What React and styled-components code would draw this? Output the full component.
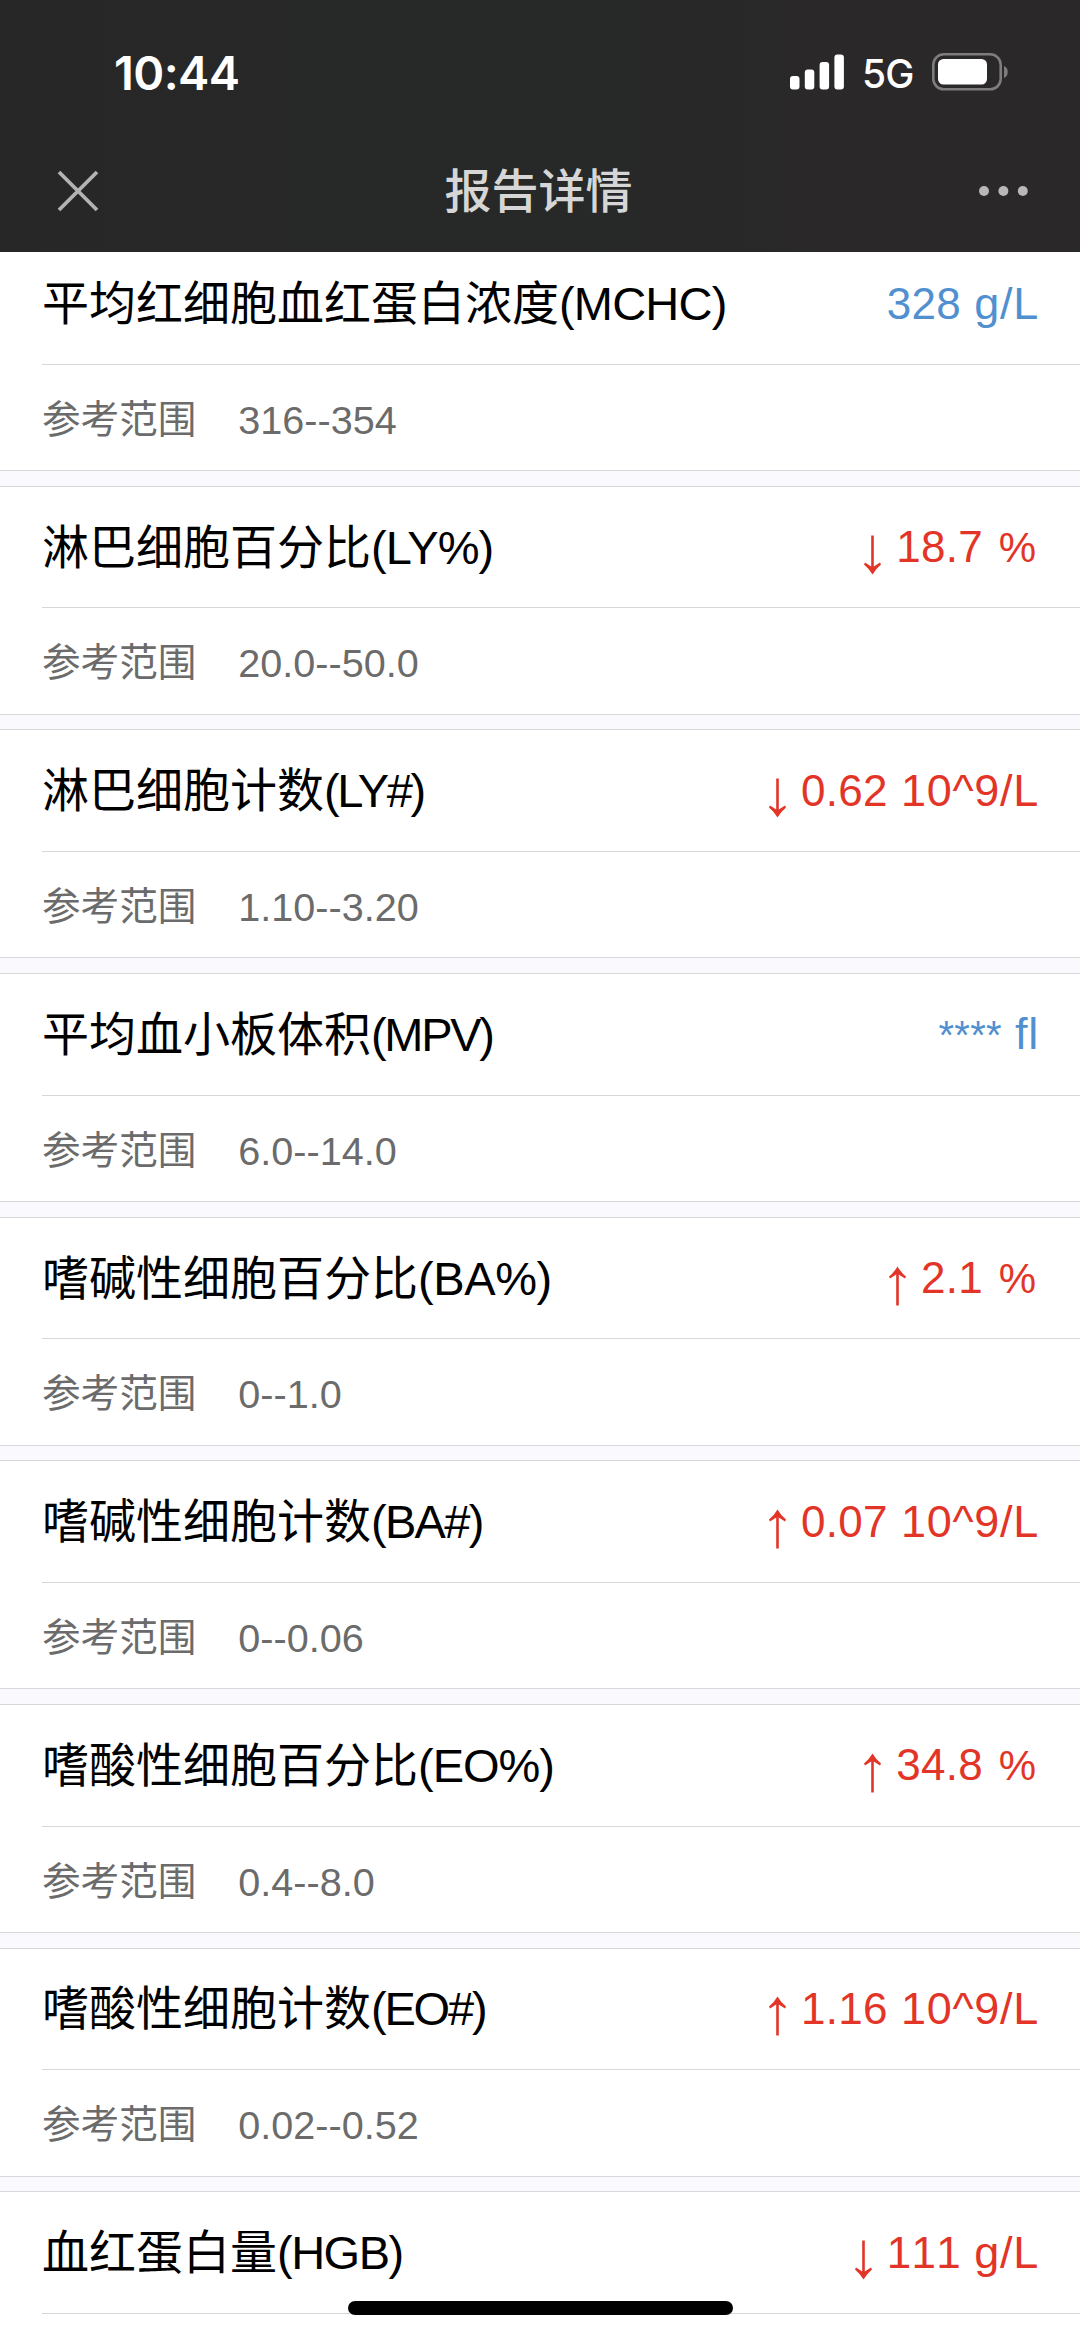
import React from 'react';
import styled, { createGlobalStyle } from 'styled-components';

const GlobalStyle = createGlobalStyle`
    body {
        margin: 0;
        background: #fff;
        font-family: "Liberation Sans", "Noto Sans CJK SC", sans-serif;
    }
`;

const Screen = styled.div`
    position: relative;
    display: flex;
    flex-direction: column;
    width: 1080px;
    height: 2337px;
    overflow: hidden;
    background: #fff;
`;

const Header = styled.header`
    flex: none;
    height: 252px;
    background: linear-gradient(90deg, #272727 0%, #272828 55%, #2a2829 75%);
`;

const StatusBar = styled.div`
    display: flex;
    align-items: center;
    justify-content: space-between;
    height: 144px;
    padding: 0 71px 0 114px;
    box-sizing: border-box;
    font-family: Inter, sans-serif;
    color: #fff;
`;

const Time = styled.span`
    font-size: 47px;
    font-weight: 600;
    letter-spacing: -0.6px;
`;

const StatusIcons = styled.div`
    display: flex;
    align-items: center;
`;

const Network = styled.span`
    width: 51px;
    margin: 3px 19px 0 17px;
    font-size: 39px;
    font-weight: 500;
    letter-spacing: -0.8px;
`;

const NavBar = styled.div`
    display: flex;
    align-items: center;
    justify-content: space-between;
    height: 94px;
    padding: 0 52px 0 57px;
`;

const NavTitle = styled.h1`
    margin: 1px 0 0;
    font-size: 47px;
    font-weight: 500;
    line-height: 60px;
    color: #d6d6d6;
`;

const Content = styled.main`
    flex: 1;
    min-height: 0;
    overflow: hidden;
`;

// The list is scrolled a little, so its first row starts under the header
const List = styled.div`
    margin-top: -9.8px;
    background: #f9f9fe;
`;

const Item = styled.section`
    height: 229px;
    margin-bottom: 14.63px;
    box-sizing: border-box;
    border-top: 1px solid #d8d8da;
    border-bottom: 1px solid #d8d8da;
    background: #fff;
`;

const ItemHead = styled.div`
    display: flex;
    align-items: center;
    justify-content: space-between;
    height: 121.6px;
    margin-left: 42px;
    padding: 1px 41px 0 0;
    box-sizing: border-box;
    border-bottom: 1px solid #d8d8da;
`;

const Name = styled.span`
    font-size: 47px;
    line-height: 60px;
    color: #000;
`;

const Code = styled.span`
    letter-spacing: ${({ $tracking }) => $tracking}px;
`;

const Value = styled.span`
    display: flex;
    align-items: baseline;
    font-size: 45px;
    line-height: 60px;
    font-kerning: none;
    white-space: pre;
    color: ${({ $abnormal }) => ($abnormal ? '#e23528' : '#5190d0')};
`;

const Amount = styled.span`
    font-size: ${({ $masked }) => ($masked ? '40px' : '44px')};
    letter-spacing: 0.3px;
`;

const Unit = styled.span`
    letter-spacing: 0.7px;
`;

const Percent = styled.span`
    margin: 0 3px 0 4px;
    font-size: 42px;
`;

const Arrow = styled.svg`
    align-self: center;
    width: 17px;
    height: 40px;
    margin: 14px 15px 0 0;
    transform: ${({ $dir }) => ($dir === 'up' ? 'rotate(180deg)' : 'none')};
`;

const Reference = styled.div`
    display: flex;
    align-items: center;
    height: 106px;
    margin-left: 42px;
    padding-top: 4px;
    box-sizing: border-box;
    font-size: 38.6px;
    line-height: 50px;
    color: #6b6b6b;
`;

const Range = styled.span`
    margin-left: 42px;
    font-size: 39.6px;
    font-kerning: none;
`;

const HomeIndicator = styled.div`
    position: absolute;
    left: 348px;
    bottom: 22px;
    width: 385px;
    height: 14px;
    border-radius: 7px;
    background: #000;
`;

const SignalIcon = () => (
    <svg width="55" height="36" viewBox="0 0 55 36" fill="#fff">
        <rect x="0" y="22" width="9.5" height="13.5" rx="3" />
        <rect x="14.8" y="15.5" width="9.5" height="20" rx="3" />
        <rect x="29.6" y="8" width="9.5" height="27.5" rx="3" />
        <rect x="44.4" y="0.5" width="9.5" height="35" rx="3" />
    </svg>
);

const BatteryIcon = () => (
    <svg width="77" height="38" viewBox="0 0 77 38">
        <rect x="1.3" y="1.3" width="67.4" height="35" rx="10.5" fill="none" stroke="#7e7d7d" strokeWidth="2.6" />
        <rect x="6" y="6" width="49" height="25.5" rx="5.5" fill="#fff" />
        <path d="M72 13 C77 14.5 77 23.5 72 25 Z" fill="#7e7d7d" />
    </svg>
);

const CloseIcon = () => (
    <svg width="42" height="42" viewBox="0 0 42 42" stroke="#b4b3b4" strokeWidth="3.8">
        <path d="M2 2 L40 40 M40 2 L2 40" />
    </svg>
);

const MoreIcon = () => (
    <svg width="50" height="12" viewBox="0 0 50 12" fill="#b9b7b8">
        <circle cx="6" cy="6" r="5" />
        <circle cx="25.4" cy="6" r="5" />
        <circle cx="44.8" cy="6" r="5" />
    </svg>
);

const ArrowIcon = ({ dir }) => (
    <Arrow $dir={dir} viewBox="0 0 17 40" fill="currentColor">
        <path d="M7.2 0.5 H9.8 V31.5 L16 27.6 L17 29.4 Q12 33.5 8.5 39.5 Q5 33.5 0 29.4 L1 27.6 L7.2 31.5 Z" />
    </Arrow>
);

const items = [
    { name: '平均红细胞血红蛋白浓度', code: '(MCHC)', tracking: -0.8, value: '328', unit: 'g/L', range: '316--354' },
    { name: '淋巴细胞百分比', code: '(LY%)', tracking: -1, value: '18.7', unit: '%', range: '20.0--50.0', dir: 'down' },
    { name: '淋巴细胞计数', code: '(LY#)', tracking: -2.3, value: '0.62', unit: '10^9/L', range: '1.10--3.20', dir: 'down' },
    { name: '平均血小板体积', code: '(MPV)', tracking: -2.3, value: '****', unit: 'fl', range: '6.0--14.0' },
    { name: '嗜碱性细胞百分比', code: '(BA%)', tracking: -0.4, value: '2.1', unit: '%', range: '0--1.0', dir: 'up' },
    { name: '嗜碱性细胞计数', code: '(BA#)', tracking: -1.7, value: '0.07', unit: '10^9/L', range: '0--0.06', dir: 'up' },
    { name: '嗜酸性细胞百分比', code: '(EO%)', tracking: -1, value: '34.8', unit: '%', range: '0.4--8.0', dir: 'up' },
    { name: '嗜酸性细胞计数', code: '(EO#)', tracking: -2.2, value: '1.16', unit: '10^9/L', range: '0.02--0.52', dir: 'up' },
    { name: '血红蛋白量', code: '(HGB)', tracking: -1.5, value: '111', unit: 'g/L', dir: 'down' },
];

const ReportItem = ({ item }) => (
    <Item>
        <ItemHead>
            <Name>{item.name}<Code $tracking={item.tracking}>{item.code}</Code></Name>
            <Value $abnormal={!!item.dir}>
                {item.dir && <ArrowIcon dir={item.dir} />}
                <Amount $masked={item.value === '****'}>{item.value}</Amount>
                {item.unit === '%' ? <Percent> %</Percent> : <Unit> {item.unit}</Unit>}
            </Value>
        </ItemHead>
        {item.range && (
            <Reference>
                <span>参考范围</span>
                <Range>{item.range}</Range>
            </Reference>
        )}
    </Item>
);

const App = () => (
    <Screen lang="zh-CN">
        <GlobalStyle />
        <Header>
            <StatusBar>
                <Time>10:44</Time>
                <StatusIcons>
                    <SignalIcon />
                    <Network>5G</Network>
                    <BatteryIcon />
                </StatusIcons>
            </StatusBar>
            <NavBar>
                <CloseIcon />
                <NavTitle>报告详情</NavTitle>
                <MoreIcon />
            </NavBar>
        </Header>
        <Content>
            <List>
                {items.map((item) => <ReportItem key={item.code} item={item} />)}
            </List>
        </Content>
        <HomeIndicator />
    </Screen>
);

export default App;
